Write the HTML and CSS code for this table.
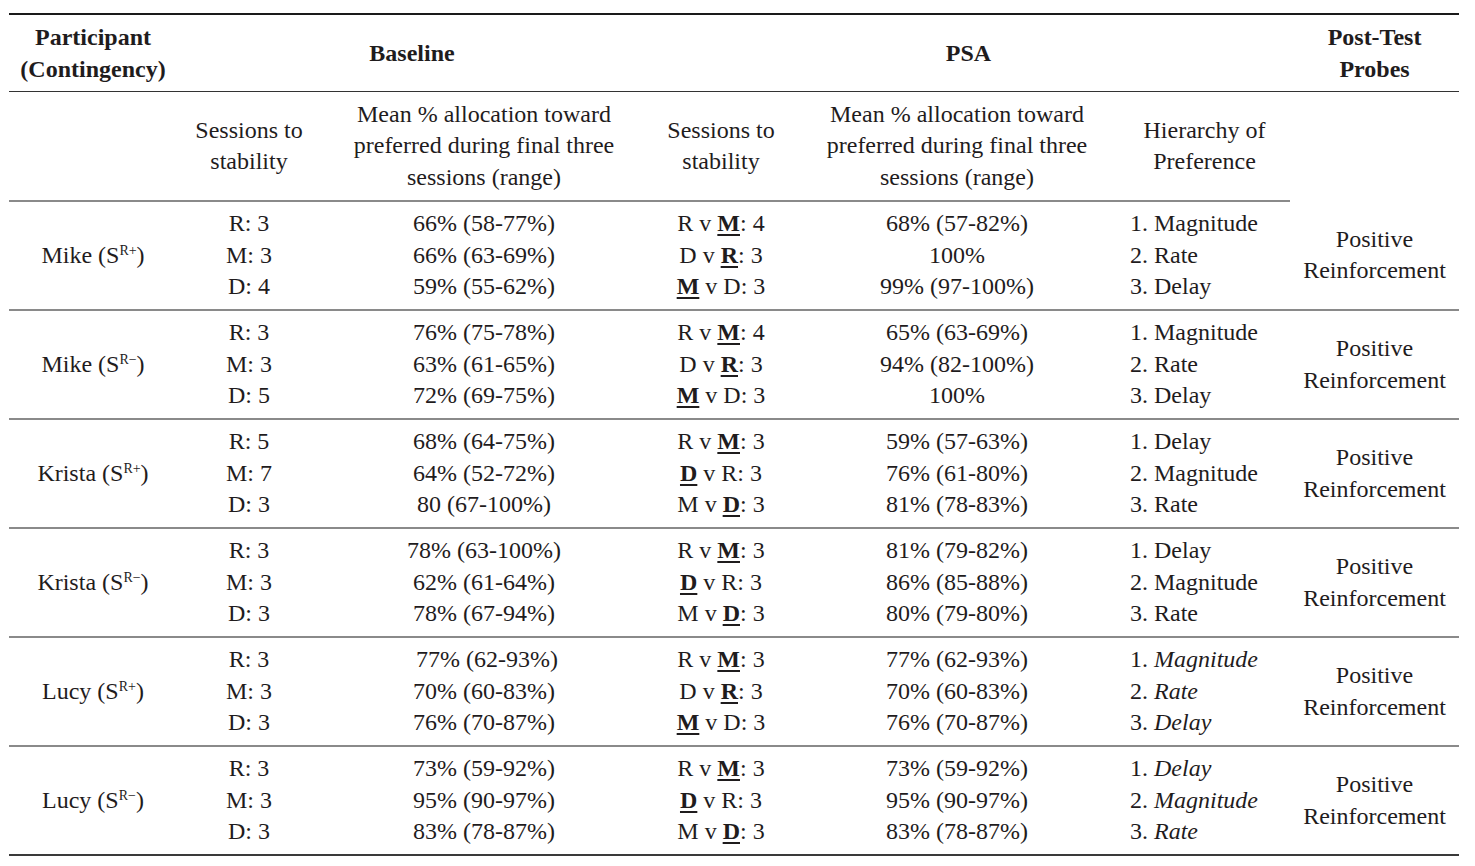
FILE: index.html
```html
<!DOCTYPE html>
<html>
<head>
<meta charset="utf-8">
<link rel="stylesheet" href="styles.css">
</head>
<body>
<table class="data-table">
  <colgroup>
    <col class="c-part"><col class="c-bss"><col class="c-bmean"><col class="c-pss"><col class="c-pmean"><col class="c-hier"><col class="c-post">
  </colgroup>
  <thead>
    <tr class="head-1">
      <th>Participant<br>(Contingency)</th>
      <th colspan="2">Baseline</th>
      <th colspan="3">PSA</th>
      <th>Post-Test<br>Probes</th>
    </tr>
    <tr class="head-2">
      <th></th>
      <th>Sessions to<br>stability</th>
      <th>Mean % allocation toward<br>preferred during final three<br>sessions (range)</th>
      <th>Sessions to<br>stability</th>
      <th>Mean % allocation toward<br>preferred during final three<br>sessions (range)</th>
      <th>Hierarchy of<br>Preference</th>
      <th class="no-line"></th>
    </tr>
  </thead>
  <tbody>
    <tr>
      <td>Mike (S<sup>R+</sup>)</td>
      <td><div>R: 3</div><div>M: 3</div><div>D: 4</div></td>
      <td><div>66% (58-77%)</div><div>66% (63-69%)</div><div>59% (55-62%)</div></td>
      <td><div>R v <span class="pref">M</span>: 4</div><div>D v <span class="pref">R</span>: 3</div><div><span class="pref">M</span> v D: 3</div></td>
      <td><div>68% (57-82%)</div><div>100%</div><div>99% (97-100%)</div></td>
      <td class="hier"><div>1. Magnitude</div><div>2. Rate</div><div>3. Delay</div></td>
      <td>Positive<br>Reinforcement</td>
    </tr>
    <tr>
      <td>Mike (S<sup>R&minus;</sup>)</td>
      <td><div>R: 3</div><div>M: 3</div><div>D: 5</div></td>
      <td><div>76% (75-78%)</div><div>63% (61-65%)</div><div>72% (69-75%)</div></td>
      <td><div>R v <span class="pref">M</span>: 4</div><div>D v <span class="pref">R</span>: 3</div><div><span class="pref">M</span> v D: 3</div></td>
      <td><div>65% (63-69%)</div><div>94% (82-100%)</div><div>100%</div></td>
      <td class="hier"><div>1. Magnitude</div><div>2. Rate</div><div>3. Delay</div></td>
      <td>Positive<br>Reinforcement</td>
    </tr>
    <tr>
      <td>Krista (S<sup>R+</sup>)</td>
      <td><div>R: 5</div><div>M: 7</div><div>D: 3</div></td>
      <td><div>68% (64-75%)</div><div>64% (52-72%)</div><div>80 (67-100%)</div></td>
      <td><div>R v <span class="pref">M</span>: 3</div><div><span class="pref">D</span> v R: 3</div><div>M v <span class="pref">D</span>: 3</div></td>
      <td><div>59% (57-63%)</div><div>76% (61-80%)</div><div>81% (78-83%)</div></td>
      <td class="hier"><div>1. Delay</div><div>2. Magnitude</div><div>3. Rate</div></td>
      <td>Positive<br>Reinforcement</td>
    </tr>
    <tr>
      <td>Krista (S<sup>R&minus;</sup>)</td>
      <td><div>R: 3</div><div>M: 3</div><div>D: 3</div></td>
      <td><div>78% (63-100%)</div><div>62% (61-64%)</div><div>78% (67-94%)</div></td>
      <td><div>R v <span class="pref">M</span>: 3</div><div><span class="pref">D</span> v R: 3</div><div>M v <span class="pref">D</span>: 3</div></td>
      <td><div>81% (79-82%)</div><div>86% (85-88%)</div><div>80% (79-80%)</div></td>
      <td class="hier"><div>1. Delay</div><div>2. Magnitude</div><div>3. Rate</div></td>
      <td>Positive<br>Reinforcement</td>
    </tr>
    <tr>
      <td>Lucy (S<sup>R+</sup>)</td>
      <td><div>R: 3</div><div>M: 3</div><div>D: 3</div></td>
      <td><div>&nbsp;77% (62-93%)</div><div>70% (60-83%)</div><div>76% (70-87%)</div></td>
      <td><div>R v <span class="pref">M</span>: 3</div><div>D v <span class="pref">R</span>: 3</div><div><span class="pref">M</span> v D: 3</div></td>
      <td><div>77% (62-93%)</div><div>70% (60-83%)</div><div>76% (70-87%)</div></td>
      <td class="hier"><div>1. <em>Magnitude</em></div><div>2. <em>Rate</em></div><div>3. <em>Delay</em></div></td>
      <td>Positive<br>Reinforcement</td>
    </tr>
    <tr>
      <td>Lucy (S<sup>R&minus;</sup>)</td>
      <td><div>R: 3</div><div>M: 3</div><div>D: 3</div></td>
      <td><div>73% (59-92%)</div><div>95% (90-97%)</div><div>83% (78-87%)</div></td>
      <td><div>R v <span class="pref">M</span>: 3</div><div><span class="pref">D</span> v R: 3</div><div>M v <span class="pref">D</span>: 3</div></td>
      <td><div>73% (59-92%)</div><div>95% (90-97%)</div><div>83% (78-87%)</div></td>
      <td class="hier"><div>1. <em>Delay</em></div><div>2. <em>Magnitude</em></div><div>3. <em>Rate</em></div></td>
      <td>Positive<br>Reinforcement</td>
    </tr>
  </tbody>
</table>
</body>
</html>
```

FILE: styles.css
```css
html, body {
  margin: 0;
  padding: 0;
  background: #ffffff;
}

body {
  font-family: "Liberation Serif", "Times New Roman", serif;
  font-size: 24px;
  color: #1f1c1d;
}

.data-table {
  margin: 13px 0 0 9px;
  width: 1450px;
  table-layout: fixed;
  border-collapse: collapse;
  border-top: 2px solid #1a1a1a;
  border-bottom: 2px solid #3a3a3a;
}

.c-part { width: 168px; }
.c-bss { width: 144px; }
.c-bmean { width: 326px; }
.c-pss { width: 148px; }
.c-pmean { width: 324px; }
.c-hier { width: 171px; }
.c-post { width: 169px; }

th, td {
  padding: 0;
  text-align: center;
  vertical-align: middle;
  line-height: 31.5px;
}

.head-1 th {
  font-weight: bold;
  height: 76px;
  line-height: 32px;
  border-bottom: 1px solid #333333;
}

.head-2 th {
  font-weight: normal;
  height: 108px;
  border-bottom: 2px solid #8a8a8a;
}

.head-2 th.no-line {
  border-bottom: none;
}

tbody tr {
  height: 109px;
}

tbody tr + tr td {
  border-top: 2px solid #8a8a8a;
}

tbody td {
  padding: 6px 0;
}

td.hier {
  text-align: left;
  padding-left: 11px;
}

sup {
  font-size: 14px;
  line-height: 0;
  vertical-align: 8px;
}

.pref {
  font-weight: bold;
  text-decoration: underline;
  text-underline-offset: 3px;
}
```
